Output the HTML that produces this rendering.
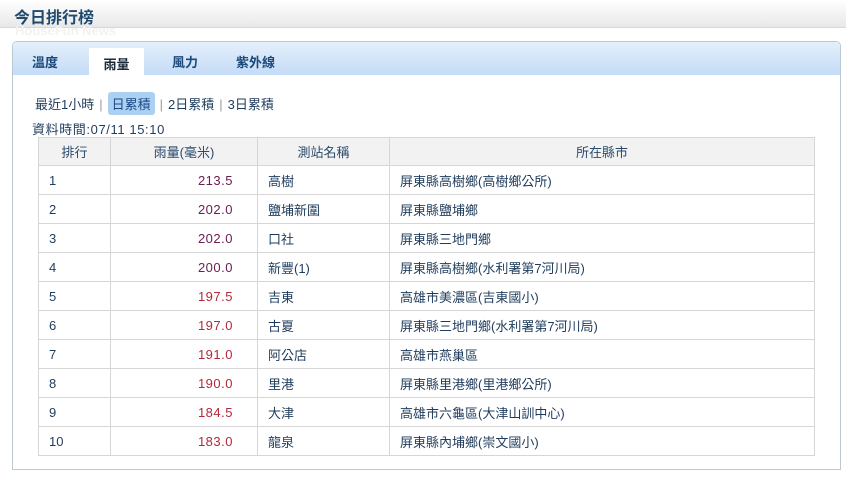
<!DOCTYPE html>
<html><head><meta charset="utf-8"><style>
*{margin:0;padding:0;box-sizing:border-box}
body{width:846px;height:477px;background:#fff;font-family:"Liberation Sans","Noto Sans CJK TC",sans-serif;position:relative;overflow:hidden;color:#1f3c5c}
.top{position:absolute;left:0;top:0;width:846px;height:28px;background:linear-gradient(#fff,#e8e8e8);border-bottom:1px solid #d8d8d8}
.top h1{position:absolute;left:14px;top:4px;font-size:16px;font-weight:bold;color:#1f4a6e}
.wm{position:absolute;left:15px;top:24px;font-size:13px;font-weight:bold;color:#f2f2f2;line-height:13px}
.panel{position:absolute;left:12px;top:41px;width:829px;height:429px;border:1px solid #b9c9d4;border-radius:5px 5px 0 0}
.tabs{position:absolute;left:0;top:0;width:827px;height:33px;background:linear-gradient(#e4effb,#c4dcf7);border-radius:5px 5px 0 0}
.tab{position:absolute;top:10px;font-size:13px;font-weight:bold;color:#1c4a7a}
.tab.on{top:6px;left:76px;width:55px;height:28px;background:#fff;text-align:center;padding-top:6px;color:#1a2a3a}
.sub{position:absolute;left:22px;top:50px;font-size:13px;color:#1f3c5c}
.sub span{display:inline-block}
.hl{background:#acd0f2;border-radius:3px;padding:2px 4px;color:#1a4a8a}
.sep{color:#999;margin:0 5px}
.time{position:absolute;left:19px;top:77px;font-size:13px;letter-spacing:0.6px}
table{position:absolute;left:25px;top:95px;border-collapse:collapse;font-size:13px}
td,th{border:1px solid #d6d6d6;height:29px;padding:0 10px;font-weight:normal}
th{background:#f2f2f2;height:28px;color:#2a4a6a}
td.n{text-align:right;padding-right:24px;letter-spacing:0.5px}
.p{color:#6a2050}.r{color:#b4283a}
</style></head><body>
<div class="top"><h1>今日排行榜</h1></div>
<div class="wm">HouseFun News</div>
<div class="panel">
<div class="tabs">
<div class="tab" style="left:19px">溫度</div>
<div class="tab on">雨量</div>
<div class="tab" style="left:159px">風力</div>
<div class="tab" style="left:223px">紫外線</div>
</div>
<div class="sub"><span>最近1小時</span><span class="sep">|</span><span class="hl">日累積</span><span class="sep">|</span><span>2日累積</span><span class="sep">|</span><span>3日累積</span></div>
<div class="time">資料時間:07/11 15:10</div>
<table>
<colgroup><col style="width:72px"><col style="width:147px"><col style="width:132px"><col style="width:425px"></colgroup>
<tr><th>排行</th><th>雨量(毫米)</th><th>測站名稱</th><th>所在縣市</th></tr>
<tr><td>1</td><td class="n p">213.5</td><td>高樹</td><td>屏東縣高樹鄉(高樹鄉公所)</td></tr>
<tr><td>2</td><td class="n p">202.0</td><td>鹽埔新圍</td><td>屏東縣鹽埔鄉</td></tr>
<tr><td>3</td><td class="n p">202.0</td><td>口社</td><td>屏東縣三地門鄉</td></tr>
<tr><td>4</td><td class="n p">200.0</td><td>新豐(1)</td><td>屏東縣高樹鄉(水利署第7河川局)</td></tr>
<tr><td>5</td><td class="n r">197.5</td><td>吉東</td><td>高雄市美濃區(吉東國小)</td></tr>
<tr><td>6</td><td class="n r">197.0</td><td>古夏</td><td>屏東縣三地門鄉(水利署第7河川局)</td></tr>
<tr><td>7</td><td class="n r">191.0</td><td>阿公店</td><td>高雄市燕巢區</td></tr>
<tr><td>8</td><td class="n r">190.0</td><td>里港</td><td>屏東縣里港鄉(里港鄉公所)</td></tr>
<tr><td>9</td><td class="n r">184.5</td><td>大津</td><td>高雄市六龜區(大津山訓中心)</td></tr>
<tr><td>10</td><td class="n r">183.0</td><td>龍泉</td><td>屏東縣內埔鄉(崇文國小)</td></tr>
</table>
</div>
</body></html>
